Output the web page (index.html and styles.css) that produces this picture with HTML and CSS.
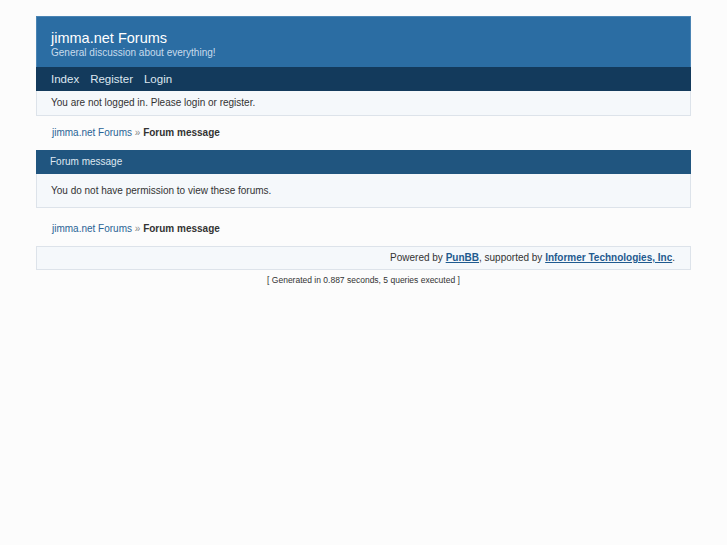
FILE: index.html
```html
<!DOCTYPE html>
<html lang="en">
<head>
    <meta charset="UTF-8">
    <title>jimma.net Forums / Forum message</title>
    <link rel="stylesheet" href="styles.css">
</head>
<body>

    <div class="brd">
        <div class="brd-head">
            <div class="brd-title">jimma.net Forums</div>
            <div class="brd-desc">General discussion about everything!</div>
        </div>

        <div class="brd-nav">
            <a href="#">Index</a>
            <a href="#">Register</a>
            <a href="#">Login</a>
        </div>

        <div class="brd-status">You are not logged in. Please login or register.</div>

        <div class="crumbs">
            <a href="#">jimma.net Forums</a> <span class="sep">&raquo;</span> <strong>Forum message</strong>
        </div>

        <div class="box">
            <div class="box-head">Forum message</div>
            <div class="box-body">You do not have permission to view these forums.</div>
        </div>

        <div class="crumbs">
            <a href="#">jimma.net Forums</a> <span class="sep">&raquo;</span> <strong>Forum message</strong>
        </div>

        <div class="brd-about">
            Powered by <a href="#">PunBB</a>, supported by <a href="#">Informer Technologies, Inc</a>.
        </div>

        <p class="debug">[ Generated in 0.887 seconds, 5 queries executed ]</p>
    </div>

</body>
</html>
```

FILE: styles.css
```css
body {
    font-family: "Liberation Sans", Arial, sans-serif;
    font-size: 10px;
    background-color: #fcfcfc;
    color: #333;
    margin: 0;
    padding: 16px 36px;
}

a {
    color: #2a6496;
    text-decoration: none;
}

.brd-head {
    background-color: #2b6da3;
    border: 1px solid #4a84b4;
    border-bottom: none;
    padding: 12px 14px 8px;
    color: #fff;
}

.brd-title {
    font-size: 14.5px;
    line-height: 18px;
}

.brd-desc {
    font-size: 10px;
    line-height: 12px;
    color: #c8dbec;
}

.brd-nav {
    background-color: #133a5c;
    display: flex;
    gap: 11px;
    padding: 0 15px;
    height: 24px;
    align-items: center;
}

.brd-nav a {
    color: #dde7f0;
    font-size: 11.5px;
}

.brd-status {
    background-color: #f5f8fb;
    border: 1px solid #dde3ea;
    border-top: none;
    padding: 5px 14px 6px;
    line-height: 13px;
}

.crumbs {
    padding: 10px 16px 11px;
    line-height: 13px;
}

.crumbs .sep {
    color: #888;
}

.box {
    margin-bottom: 4px;
}

.box-head {
    background-color: #20557f;
    color: #dfe8f1;
    height: 24px;
    line-height: 24px;
    padding: 0 14px;
}

.box-body {
    background-color: #f5f8fb;
    border: 1px solid #dde3ea;
    border-top: none;
    padding: 10px 14px 10px;
    line-height: 13px;
}

.brd-about {
    background-color: #f5f8fb;
    border: 1px solid #dde3ea;
    text-align: right;
    padding: 5px 15px 5px;
    line-height: 12px;
}

.brd-about a {
    font-weight: bold;
    text-decoration: underline;
    color: #1f5a8f;
}

.debug {
    text-align: center;
    font-size: 8.5px;
    margin: 5px 0 0;
}
```
